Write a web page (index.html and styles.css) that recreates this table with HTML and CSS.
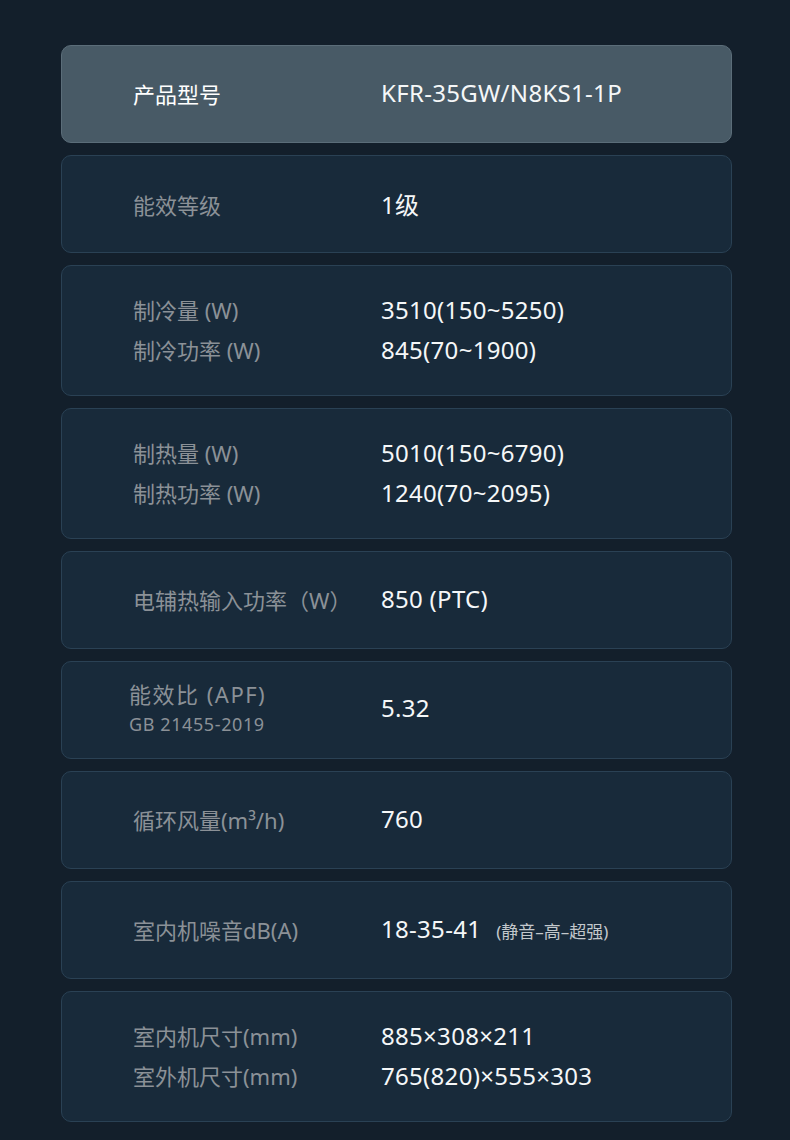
FILE: index.html
```html
<!DOCTYPE html>
<html lang="zh">
<head>
<meta charset="utf-8">
<title>产品参数</title>
<link rel="stylesheet" href="styles.css">
</head>
<body>
<div class="specs">
  <div class="card card-head">
    <div class="row"><span class="label">产品型号</span><span class="value">KFR-35GW/N8KS1-1P</span></div>
  </div>
  <div class="card">
    <div class="row"><span class="label">能效等级</span><span class="value">1级</span></div>
  </div>
  <div class="card card-tall">
    <div class="row"><span class="label">制冷量 (W)</span><span class="value">3510(150~5250)</span></div>
    <div class="row"><span class="label">制冷功率 (W)</span><span class="value">845(70~1900)</span></div>
  </div>
  <div class="card card-tall">
    <div class="row"><span class="label">制热量 (W)</span><span class="value">5010(150~6790)</span></div>
    <div class="row"><span class="label">制热功率 (W)</span><span class="value">1240(70~2095)</span></div>
  </div>
  <div class="card">
    <div class="row"><span class="label">电辅热输入功率（W）</span><span class="value">850 (PTC)</span></div>
  </div>
  <div class="card">
    <div class="row row-apf">
      <span class="label label-apf"><span class="apf-main">能效比 (APF)</span><span class="apf-sub">GB 21455-2019</span></span>
      <span class="value">5.32</span>
    </div>
  </div>
  <div class="card">
    <div class="row"><span class="label">循环风量(m³/h)</span><span class="value">760</span></div>
  </div>
  <div class="card">
    <div class="row"><span class="label">室内机噪音dB(A)</span><span class="value">18-35-41<span class="note">(静音–高–超强)</span></span></div>
  </div>
  <div class="card card-tall">
    <div class="row"><span class="label">室内机尺寸(mm)</span><span class="value">885×308×211</span></div>
    <div class="row"><span class="label">室外机尺寸(mm)</span><span class="value">765(820)×555×303</span></div>
  </div>
</div>
</body>
</html>
```
FILE: styles.css
```css
* { box-sizing: border-box; }
html, body { margin: 0; padding: 0; }
body {
  background: #131f2b;
  font-family: "Noto Sans", "Noto Sans CJK SC", sans-serif;
  width: 790px;
  height: 1140px;
  overflow: hidden;
}
.specs {
  display: flex;
  flex-direction: column;
  gap: 12px;
  padding: 45px 58px 0 61px;
}
.card {
  height: 98px;
  background: #182a3a;
  border: 1px solid #2a4154;
  border-radius: 10px;
  display: flex;
  flex-direction: column;
  justify-content: center;
  gap: 8px;
  padding-left: 71px;
  padding-bottom: 4px;
}
.card-tall { height: 131px; }
.card-head {
  background: #485a66;
  border-color: #5b6d79;
}
.row {
  display: grid;
  grid-template-columns: 248px 1fr;
  align-items: center;
  height: 32px;
}
.label {
  color: #8b9197;
  font-size: 22px;
  white-space: nowrap;
}
.card-head .label { color: #ffffff; }
.value {
  color: #f5f7f8;
  font-size: 24px;
  letter-spacing: 0.3px;
  white-space: nowrap;
}
.note {
  font-size: 17px;
  letter-spacing: 0;
  margin-left: 15px;
  color: #c3c8cc;
}
.row-apf { height: auto; }
.label-apf {
  display: flex;
  flex-direction: column;
  margin-left: -4px;
  line-height: 1.3;
  gap: 4px;
}
.apf-main { font-size: 22px; letter-spacing: 1.5px; }
.apf-sub { font-size: 18px; letter-spacing: 0.6px; }
```
